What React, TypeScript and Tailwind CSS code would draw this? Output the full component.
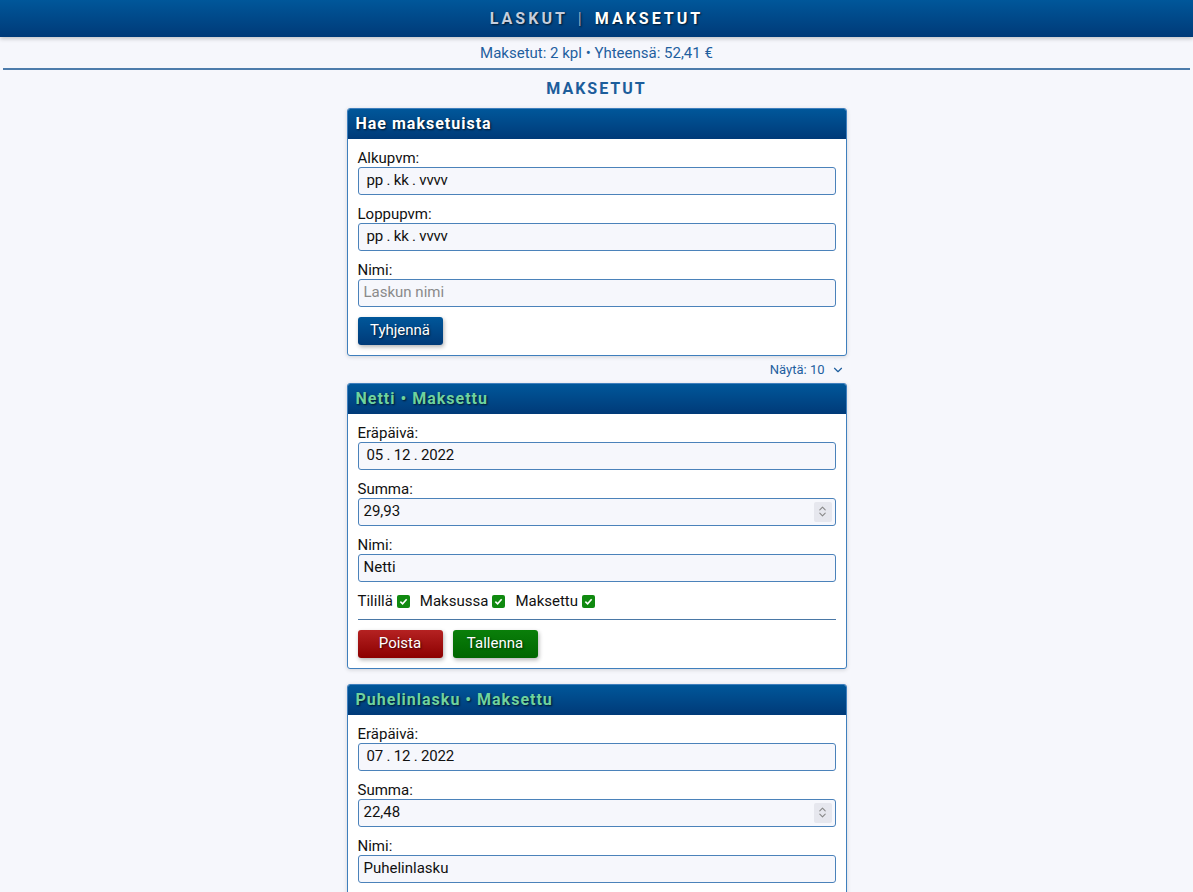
import { ChevronDown, ChevronsUpDown } from "lucide-react";

const headerBg = "bg-[linear-gradient(to_bottom,#00579a,#003a78)]";

function Label({ children }: { children: React.ReactNode }) {
  return <div className="text-[15px] leading-[18px] text-[#111]">{children}</div>;
}

function Field({
  label,
  value,
  placeholder,
  date,
  number,
}: {
  label: string;
  value?: string;
  placeholder?: string;
  date?: boolean;
  number?: boolean;
}) {
  return (
    <div className="mb-[10px]">
      <Label>{label}</Label>
      <div className="h-[28px] rounded-[3px] border border-[#4b82ba] bg-[#f6f7fc] flex items-center justify-between pr-[3px]">
        {value ? (
          <span className={`text-[15px] text-[#111] ${date ? "pl-[8px] tracking-[-0.2px]" : "pl-[5px]"}`}>{value}</span>
        ) : (
          <span className="text-[15px] text-[#8a8a8a] pl-[5px]">{placeholder}</span>
        )}
        {number && (
          <span className="w-[18px] h-[20px] bg-[#e6e7ee] rounded-[2px] flex items-center justify-center text-[#888]">
            <ChevronsUpDown size={13} strokeWidth={2} />
          </span>
        )}
      </div>
    </div>
  );
}

function CardHead({ title, green }: { title: string; green?: boolean }) {
  return (
    <div
      className={`${headerBg} h-[30px] flex items-center px-[8px] text-[16px] font-bold tracking-[1px] [text-shadow:1px_1px_2px_rgba(0,0,0,0.7)] ${
        green ? "text-[#6fd39f]" : "text-white"
      }`}
    >
      {title}
    </div>
  );
}

function Check({ label }: { label: string }) {
  return (
    <span className="flex items-center gap-[4px] mr-[10px]">
      <span className="text-[15px] text-[#111]">{label}</span>
      <span className="w-[13px] h-[13px] rounded-[2px] bg-[#108a10] flex items-center justify-center">
        <svg width="9" height="9" viewBox="0 0 10 10">
          <path d="M1.5 5.2 L4 7.5 L8.5 2.5" fill="none" stroke="white" strokeWidth="1.8" />
        </svg>
      </span>
    </span>
  );
}

function Btn({ children, kind }: { children: React.ReactNode; kind: "blue" | "red" | "green" }) {
  const bg =
    kind === "blue"
      ? "bg-[linear-gradient(to_bottom,#00579a,#003a78)]"
      : kind === "red"
      ? "bg-[linear-gradient(to_bottom,#b52222,#8c0000)]"
      : "bg-[linear-gradient(to_bottom,#0a7f0a,#006600)]";
  return (
    <button
      className={`${bg} h-[28px] w-[85px] rounded-[3px] text-white text-[15px] shadow-[1px_2px_4px_rgba(0,0,0,0.3)] [text-shadow:1px_1px_2px_rgba(0,0,0,0.6)]`}
    >
      {children}
    </button>
  );
}

function ItemCard({ name, date, sum }: { name: string; date: string; sum: string }) {
  return (
    <div className="w-[500px] border border-[#3f7fbd] rounded-[3px] bg-white shadow-[0_1px_4px_rgba(0,0,0,0.15)] overflow-hidden mb-[15px]">
      <CardHead title={`${name} • Maksettu`} green />
      <div className="p-[10px]">
        <Field label="Eräpäivä:" value={date} date />
        <Field label="Summa:" value={sum} number />
        <Field label="Nimi:" value={name} />
        <div className="flex items-center h-[19px]">
          <Check label="Tilillä" />
          <Check label="Maksussa" />
          <Check label="Maksettu" />
        </div>
        <div className="h-px bg-[#4a78a6] mt-[8px] mb-[10px]" />
        <div className="flex gap-[10px]">
          <Btn kind="red">Poista</Btn>
          <Btn kind="green">Tallenna</Btn>
        </div>
      </div>
    </div>
  );
}

export default function App() {
  return (
    <div className="min-h-[892px] bg-[#f6f7fc] font-['Roboto',sans-serif]">
      <div className={`${headerBg} h-[37px] flex items-center justify-center shadow-[0_2px_4px_rgba(0,0,0,0.2)] text-[16px] font-bold tracking-[3px] [text-shadow:1px_1px_2px_rgba(0,0,0,0.7)]`}>
        <span className="text-[#c5cede]">LASKUT</span>
        <span className="text-[#9aa8bf] mx-[10px] font-normal">|</span>
        <span className="text-white">MAKSETUT</span>
      </div>
      <div className="h-[31px] pt-[1px] flex items-center justify-center text-[15px] text-[#1f5f9f]">
        Maksetut: 2 kpl • Yhteensä: 52,41 €
      </div>
      <div className="mx-[3px] h-[1.5px] bg-[#4d7cab]" />
      <div className="flex flex-col items-center">
        <div className="h-[38px] flex items-center text-[16px] font-bold tracking-[2px] text-[#1c5d9b]">MAKSETUT</div>
        <div className="w-[500px] border border-[#3f7fbd] rounded-[3px] bg-white shadow-[0_1px_4px_rgba(0,0,0,0.15)] overflow-hidden">
          <CardHead title="Hae maksetuista" />
          <div className="p-[10px]">
            <Field label="Alkupvm:" value="pp . kk . vvvv" date />
            <Field label="Loppupvm:" value="pp . kk . vvvv" date />
            <Field label="Nimi:" placeholder="Laskun nimi" />
            <Btn kind="blue">Tyhjennä</Btn>
          </div>
        </div>
        <div className="w-[500px] h-[27px] pt-[2px] flex items-center justify-end pr-[2px] text-[13px] text-[#1f5f9f]">
          Näytä: 10
          <ChevronDown size={14} strokeWidth={2} className="ml-[6px]" />
        </div>
        <ItemCard name="Netti" date="05 . 12 . 2022" sum="29,93" />
        <ItemCard name="Puhelinlasku" date="07 . 12 . 2022" sum="22,48" />
      </div>
    </div>
  );
}
